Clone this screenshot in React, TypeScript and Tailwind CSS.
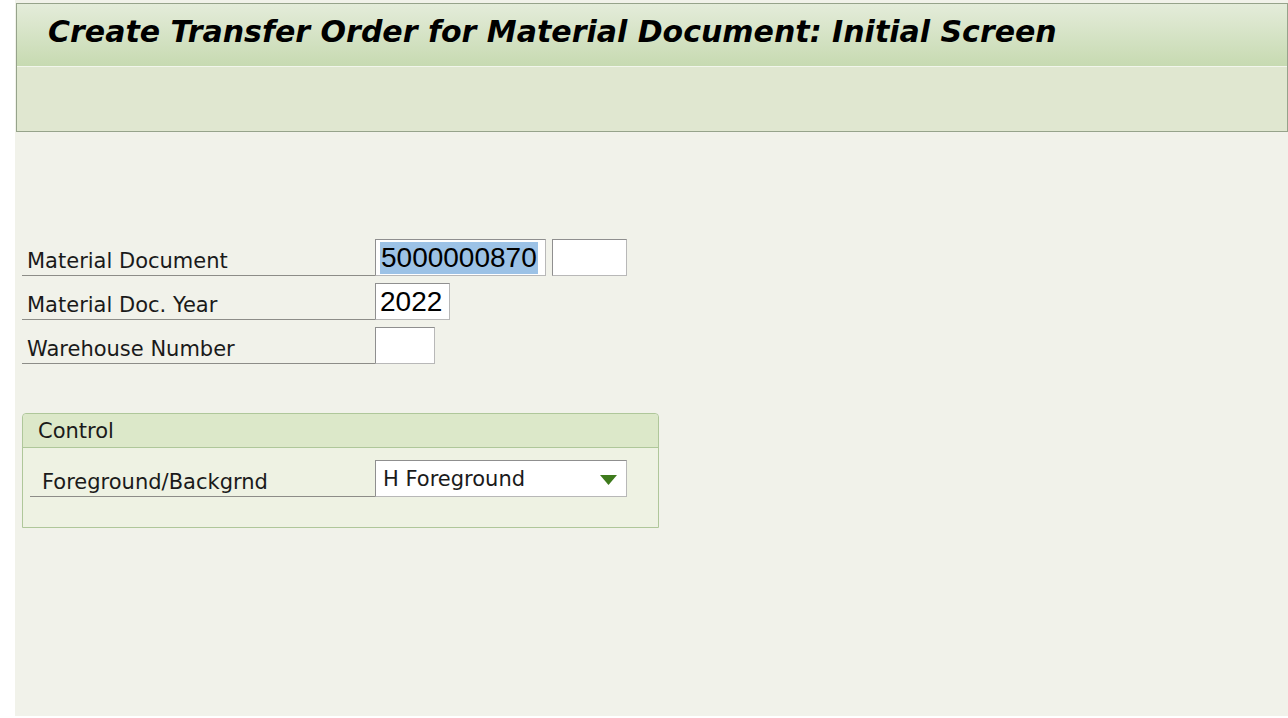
// SAP GUI style initial screen: Create Transfer Order for Material Document

const labelFont = "font-['DejaVu_Sans',Verdana,sans-serif]"

function FieldRow({ label, children }: { label: string; children: React.ReactNode }) {
  return (
    <div className="flex h-[37px] items-stretch">
      <div className={`w-[353px] border-b border-[#8d8d88] flex items-end pl-[5px] pb-[3px] text-[21px] leading-none text-[#1a1a1a] ${labelFont}`}>
        {label}
      </div>
      <div className="flex gap-[6px]">{children}</div>
    </div>
  )
}

function Box({ width, children }: { width: string; children?: React.ReactNode }) {
  return (
    <div
      className={`${width} h-full bg-white border border-[#8f8f8f] border-b-[#b8b8b8] border-r-[#b8b8b8] flex items-center px-[4px] text-[28px] leading-none text-black font-['Liberation_Sans',Arial,sans-serif]`}
    >
      {children}
    </div>
  )
}

export default function App() {
  return (
    <div className="min-h-[718px] bg-white pl-[15px]">
      <div className="min-h-[716px] bg-[#f1f2ea] pt-[3px]">
        {/* Title + toolbar */}
        <header className="ml-px border border-[#96a38b]">
          <div className="h-[62px] bg-gradient-to-b from-[#e4ecda] to-[#c7dab1] flex items-center pl-[31px] pb-[6px]">
            <h1 className="text-[30px] leading-none font-bold italic text-black font-['DejaVu_Sans',Verdana,sans-serif]">
              Create Transfer Order for Material Document: Initial Screen
            </h1>
          </div>
          <div className="h-[65px] border-t border-[#f2f6ec] bg-[#e0e7d0]" />
        </header>

        <main className="pl-[7px] pt-[107px]">
          <div className="flex flex-col gap-[7px]">
            <FieldRow label="Material Document">
              <Box width="w-[171px]">
                <span className="bg-[#9cc2e6] px-px py-[2px]">5000000870</span>
              </Box>
              <Box width="w-[75px]" />
            </FieldRow>
            <FieldRow label="Material Doc. Year">
              <Box width="w-[75px]">2022</Box>
            </FieldRow>
            <FieldRow label="Warehouse Number">
              <Box width="w-[60px]" />
            </FieldRow>
          </div>

          {/* Control group */}
          <section className="mt-[49px] w-[637px] h-[115px] border border-[#afc79a] rounded-t-[4px] bg-[#eef2e3]">
            <div className={`h-[34px] bg-[#dce8c9] border-b border-[#afc79a] rounded-t-[4px] flex items-center pl-[15px] pt-[2px] text-[21px] text-[#1a1a1a] ${labelFont}`}>
              Control
            </div>
            <div className="flex h-[37px] mt-[12px] pl-[7px]">
              <div className={`w-[345px] border-b border-[#8d8d88] flex items-end pl-[12px] pb-[3px] text-[21px] leading-none text-[#1a1a1a] ${labelFont}`}>
                Foreground/Backgrnd
              </div>
              <div className={`w-[252px] bg-white border border-[#8f8f8f] border-b-[#b8b8b8] border-r-[#b8b8b8] flex items-center justify-between pl-[7px] pr-[9px] pt-[2px] text-[21px] text-[#1a1a1a] ${labelFont}`}>
                <span>H Foreground</span>
                <svg width="17" height="10" viewBox="0 0 17 10" aria-hidden="true">
                  <path d="M0 0 H17 L8.5 10 Z" fill="#3e7a1c" />
                </svg>
              </div>
            </div>
          </section>
        </main>
      </div>
    </div>
  )
}
